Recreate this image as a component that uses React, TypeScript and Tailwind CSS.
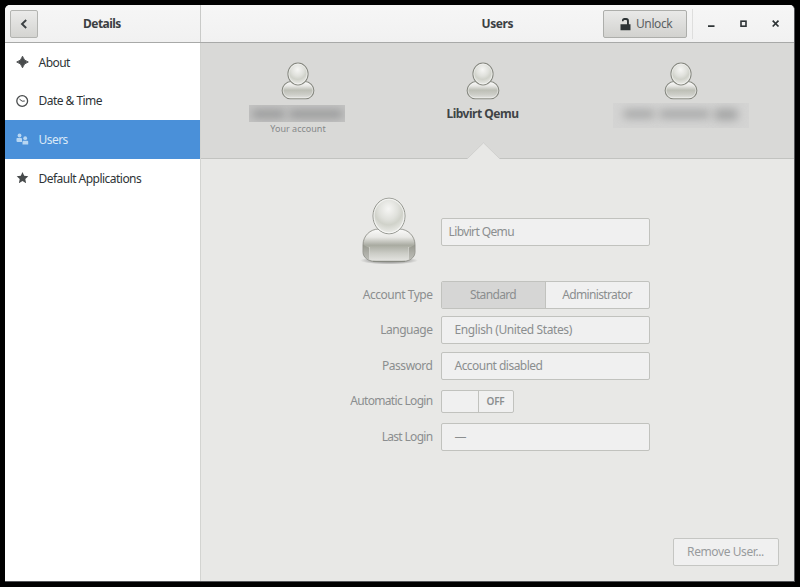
import React from "react";

function Avatar({ id, large }: { id: string; large?: boolean }) {
  return (
    <svg
      viewBox="0 0 60 70"
      preserveAspectRatio="none"
      className={large ? "h-[70px] w-[60px] shrink-0" : "h-[39px] w-[34px] shrink-0"}
    >
      <defs>
        <radialGradient id={id + "h"} cx="48%" cy="30%" r="75%">
          <stop offset="0" stopColor="#f6f6f4" />
          <stop offset="0.4" stopColor="#e0e1dc" />
          <stop offset="0.6" stopColor="#d0d2ca" />
          <stop offset="1" stopColor="#f4f4f2" />
        </radialGradient>
        <linearGradient id={id + "b"} x1="0" y1="0" x2="0" y2="1">
          <stop offset="0" stopColor="#fafaf9" />
          <stop offset="0.25" stopColor="#e8e8e5" />
          <stop offset="0.5" stopColor={large ? "#a9aba1" : "#bdbfb6"} />
          <stop offset="0.75" stopColor="#cccdc7" />
          <stop offset="1" stopColor="#e6e6e3" />
        </linearGradient>
        <radialGradient id={id + "s"}>
          <stop offset="0" stopColor="#000" stopOpacity="0.5" />
          <stop offset="0.7" stopColor="#000" stopOpacity="0.2" />
          <stop offset="1" stopColor="#000" stopOpacity="0" />
        </radialGradient>
      </defs>
      {large && <ellipse cx="30" cy="64.500" rx="29" ry="4" fill={`url(#${id}s)`} />}
      <path
        d={
          large
            ? "M20 33H40C49 33 56 40 56 49V56C56 62 50 65.500 43 65.500H17C10 65.500 4 62 4 56V49C4 40 11 33 20 33Z"
            : "M18 35H42C51 35 58 43 58 51C58 59 52 66 44 66H16C8 66 2 59 2 51C2 43 9 35 18 35Z"
        }
        fill={`url(#${id}b)`}
        stroke="#85877f"
        strokeWidth={large ? 0.8 : 1.8}
      />
      {large ? (
        <>
          <path d="M4.500 49L10.500 52V63.500C6 62 4.500 60 4.500 56ZM55.500 49L49.500 52V63.500C54 62 55.500 60 55.500 56Z" fill="#77796f" opacity="0.35" />
          <path d="M10.500 51V63.500M49.500 51V63.500" stroke="#f1f1ef" strokeWidth="0.700" opacity="0.600" />
          <path d="M14 65.300H46" stroke="#85877f" strokeWidth="1" />
        </>
      ) : (
        <path d="M18 37H42C50 37 56 44 56 51C56 58 51 64.200 43 64.200H17C9 64.200 4 58 4 51C4 44 10 37 18 37Z" fill="none" stroke="#fff" strokeOpacity="0.500" strokeWidth="1.400" />
      )}
      <ellipse
        cx="30"
        cy={large ? 20 : 21.5}
        rx={large ? 16 : 17.8}
        ry={large ? 17.8 : 19.6}
        fill={`url(#${id}h)`}
        stroke="#85877f"
        strokeWidth={large ? 0.9 : 1.8}
      />
      <ellipse
        cx="30"
        cy={large ? 20 : 21.5}
        rx={large ? 15 : 16}
        ry={large ? 16.8 : 17.9}
        fill="none"
        stroke="#fff"
        strokeOpacity="0.600"
        strokeWidth="1.200"
      />
    </svg>
  );
}

function NavRow({ icon, label, active }: { icon: React.ReactNode; label: string; active?: boolean }) {
  return (
    <div
      className={
        active
          ? "flex h-[38.6px] items-center bg-[#4a90d9] pl-[11px] text-[#dbe9f7]"
          : "flex h-[38.6px] items-center pl-[11px] text-[#2e3436]"
      }
    >
      <svg viewBox="0 0 14 14" className={active ? "h-[14px] w-[14px] text-[#b7d6f2]" : "h-[14px] w-[14px] text-[#484b4c]"}>
        {icon}
      </svg>
      <span className="ml-[8.5px] pt-px">{label}</span>
    </div>
  );
}

function FormRow({ label, tight, children }: { label: string; tight?: boolean; children: React.ReactNode }) {
  return (
    <div className="flex h-[28px] items-center">
      <span className={tight ? "mr-[8px] w-[232px] text-right tracking-[-0.68px]" : "mr-[8px] w-[232px] text-right tracking-[-0.48px]"}>
        {label}
      </span>
      {children}
    </div>
  );
}

const field = "flex h-[28px] w-[209px] items-center rounded-[2px] border border-[#c1c2be] bg-[#f0f0f0]";

export default function App() {
  return (
    <div className="h-[587px] w-[800px] overflow-hidden bg-black pl-[5px] pt-[5px] font-['Noto_Sans','Open_Sans',sans-serif] text-[12px] leading-[16px] tracking-[-0.53px] text-[#8b8e8f]">
      <div className="flex h-[577px] w-[790px] flex-col overflow-hidden rounded-t-[5px] border-b border-r border-b-[#55565a] border-r-[#55565a] bg-[#e8e8e6]">
        <header className="flex h-[38px] shrink-0 border-b-[1.5px] border-[#a8a9a8] bg-gradient-to-b from-[#f6f6f6] to-[#f1f1f1] font-bold text-[#3b4042]">
          <div className="flex w-[196px] items-center border-r border-[#c9cac8] pl-[4.5px]">
            <button className="flex h-[28px] w-[28px] items-center justify-center rounded-[2px] border border-[#b3b4b1] bg-gradient-to-b from-[#ebebea] to-[#d4d4d1]">
              <svg viewBox="0 0 10 12" className="h-[12px] w-[10px]">
                <path d="M7.200 2L3 6L7.200 10" fill="none" stroke="#3b4042" strokeWidth="1.900" />
              </svg>
            </button>
            <span className="ml-[45.5px]">Details</span>
          </div>
          <div className="flex flex-1 items-center">
            <span className="ml-[280.5px] w-[121.5px] tracking-[-0.4px]">Users</span>
            <button className="flex h-[28px] w-[84px] items-center rounded-[2px] border border-[#adaeab] bg-gradient-to-b from-[#e9e9e8] to-[#d2d2cf] pl-[15.5px] font-normal tracking-[-0.4px] text-[#5c6163]">
              <svg viewBox="0 0 11 14" className="mr-[5.5px] h-[14px] w-[11px]">
                <path d="M0.500 7.200H7V4Q7 2.900 6 2.900H4.500Q3.500 2.900 3.500 4.200H1.900Q1.900 1 4.600 1H6.300Q8.900 1 8.900 3.800V7.200H10.500V13.200H0.500Z" fill="#2e3436" />
              </svg>
              Unlock
            </button>
            <div className="ml-[5px] h-[30px] w-px bg-[#dededd]" />
            <svg viewBox="0 0 76 14" className="ml-[13px] h-[14px] w-[76px]">
              <path d="M2 9.200H8.500" stroke="#2e3436" strokeWidth="1.700" />
              <rect x="35" y="4.200" width="5" height="5" fill="none" stroke="#2e3436" strokeWidth="1.600" />
              <path d="M66.700 3.700L72.500 9.500M72.500 3.700L66.700 9.500" stroke="#2e3436" strokeWidth="1.700" />
            </svg>
          </div>
        </header>

        <div className="flex min-h-0 flex-1">
          <nav className="w-[195.5px] shrink-0 border-r border-[#d3d4d1] bg-white">
            <NavRow label="About" icon={<path d="M6.500 1.200Q7.600 5.900 12.300 7Q7.600 8.100 6.500 12.800Q5.400 8.100 0.700 7Q5.400 5.900 6.500 1.200Z" fill="currentColor" stroke="currentColor" strokeWidth="0.900" />} />
            <NavRow
              label="Date & Time"
              icon={
                <g fill="none" stroke="currentColor">
                  <circle cx="6.200" cy="7" r="5.400" strokeWidth="1.300" />
                  <path d="M3.500 5.200L6.200 7.200L8.800 7" strokeWidth="1" />
                </g>
              }
            />
            <NavRow
              active
              label="Users"
              icon={
                <g fill="currentColor">
                  <circle cx="3.500" cy="3.500" r="1.900" />
                  <path d="M1 6H5Q6 6 6 7V10H1.500Q0.500 10 0.500 9V7Q0.500 6 1 6Z" />
                  <circle cx="9.200" cy="6.200" r="1.900" />
                  <path d="M7.500 8.700H11.200Q12.200 8.700 12.200 9.700V12.500H6.500V9.700Q6.500 8.700 7.500 8.700Z" />
                </g>
              }
            />
            <NavRow label="Default Applications" icon={<path d="M6.500 1L8.200 4.800L12.300 5.300L9.300 8L10.100 12.200L6.500 10.100L2.900 12.200L3.700 8L0.700 5.300L4.800 4.800Z" fill="currentColor" />} />
          </nav>

          <main className="flex w-[593.5px] flex-col">
            <section className="relative flex h-[116px] shrink-0 border-b border-[#c2c3c0] bg-[#d9d9d7] pt-[19px]">
              <div className="flex w-[195px] flex-col items-center">
                <Avatar id="a" />
                <div className="mr-[2px] mt-[4px] flex h-[17px] w-[96px] items-center justify-center gap-[4px] overflow-hidden bg-[#c4c4c3]">
                  <div className="h-[8px] w-[33px] rounded bg-[#969798] blur-[4px]" />
                  <div className="h-[8px] w-[54px] rounded bg-[#969798] blur-[4px]" />
                </div>
                <span className="text-[9px] leading-[14px] tracking-[0.02px] text-[#858889]">Your account</span>
              </div>
              <div className="flex w-[174px] flex-col items-center">
                <Avatar id="b" />
                <span className="mt-[5px] tracking-[-0.48px] font-bold text-[#3f4446]">Libvirt Qemu</span>
              </div>
              <div className="flex w-[222px] flex-col items-center">
                <Avatar id="c" />
                <div className="mt-[2px] flex h-[25px] w-[136px] items-center justify-center gap-[4px] overflow-hidden bg-[#d4d4d3] pb-[3px]">
                  <div className="h-[8px] w-[32px] rounded bg-[#a1a2a2] blur-[5px]" />
                  <div className="h-[8px] w-[51px] rounded bg-[#a1a2a2] blur-[5px]" />
                  <div className="h-[11px] w-[24px] rounded bg-[#a1a2a2] blur-[5px]" />
                </div>
              </div>
              <svg viewBox="0 0 34 17" className="absolute -bottom-px left-[266.5px] h-[17px] w-[34px]">
                <path d="M0.500 16.500L16.500 0.800L32.500 16.500V17H0.500Z" fill="#e8e8e6" />
                <path d="M0.500 16.500L16.500 0.800L32.500 16.500" fill="none" stroke="#cbccc9" strokeWidth="0.800" />
              </svg>
            </section>

            <section className="flex h-[292px] flex-col pt-[37px]">
              <div className="flex h-[72px] items-center">
                <div className="ml-[158.5px] mr-[22px] flex self-start">
                  <Avatar id="d" large />
                </div>
                <div className={field + " pl-[6.5px] tracking-[-0.62px]"}>Libvirt Qemu</div>
              </div>
              <div className="mt-[13px] flex flex-col gap-[7.4px]">
                <FormRow label="Account Type">
                  <div className="flex h-[28px] w-[209px] overflow-hidden rounded-[2px] border border-[#c1c2be] bg-[#f0f0f0]">
                    <div className="flex w-[104px] items-center justify-center border-r border-[#c1c2be] bg-[#d6d6d5] tracking-[-0.65px]">Standard</div>
                    <div className="flex flex-1 items-center justify-center tracking-[-0.65px]">Administrator</div>
                  </div>
                </FormRow>
                <FormRow label="Language">
                  <div className={field + " pl-[13px] tracking-[-0.4px]"}>English (United States)</div>
                </FormRow>
                <FormRow label="Password">
                  <div className={field + " pl-[13px]"}>Account disabled</div>
                </FormRow>
                <FormRow label="Automatic Login" tight>
                  <div className="flex h-[23px] w-[73px] rounded-[2px] border border-[#c1c2be] bg-[#f0f0f0]">
                    <div className="w-[37px] border-r border-[#c1c2be]" />
                    <div className="flex flex-1 items-center justify-center text-[10px] font-semibold tracking-[-0.2px]">OFF</div>
                  </div>
                </FormRow>
                <FormRow label="Last Login" tight>
                  <div className={field + " pl-[13px]"}>—</div>
                </FormRow>
              </div>
            </section>
            <div className="mb-[15px] mr-[15.5px] mt-auto flex justify-end">
              <button className="h-[28px] w-[106px] rounded-[2px] border border-[#c5c6c3] bg-[#f0f0f0] text-[#989b9d] tracking-[-0.4px]">Remove User...</button>
            </div>
          </main>
        </div>
      </div>
    </div>
  );
}
